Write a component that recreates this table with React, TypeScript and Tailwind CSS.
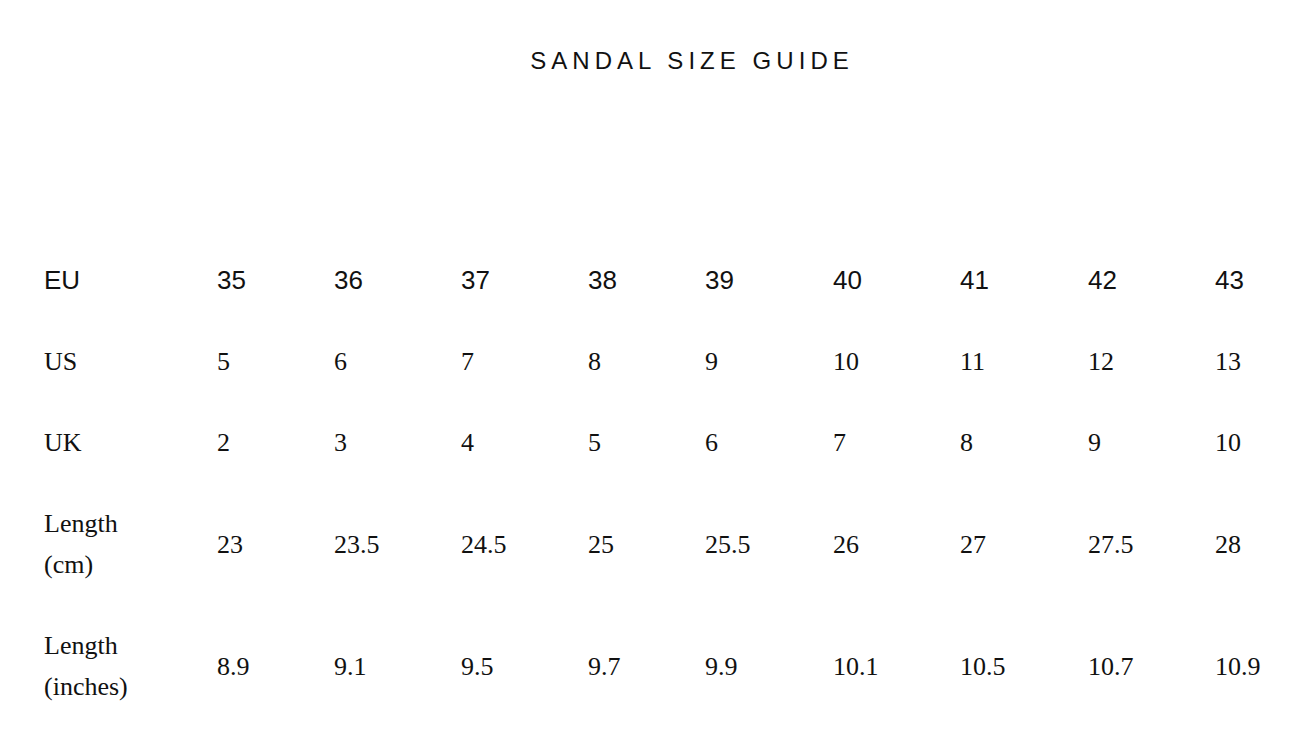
import React from "react";

const sans = "font-['Liberation_Sans',Arial,sans-serif]";
const serif = "font-['Liberation_Serif','Times_New_Roman',serif]";

const rows: { label: React.ReactNode; values: string[]; sans?: boolean }[] = [
  { label: "EU", values: ["35", "36", "37", "38", "39", "40", "41", "42", "43"], sans: true },
  { label: "US", values: ["5", "6", "7", "8", "9", "10", "11", "12", "13"] },
  { label: "UK", values: ["2", "3", "4", "5", "6", "7", "8", "9", "10"] },
  {
    label: (
      <>
        Length
        <br />
        (cm)
      </>
    ),
    values: ["23", "23.5", "24.5", "25", "25.5", "26", "27", "27.5", "28"],
  },
  {
    label: (
      <>
        Length
        <br />
        (inches)
      </>
    ),
    values: ["8.9", "9.1", "9.5", "9.7", "9.9", "10.1", "10.5", "10.7", "10.9"],
  },
];

export default function App() {
  return (
    <div className="w-[1314px] h-[750px] bg-white text-[#111] overflow-hidden">
      <h1
        className={`${sans} pt-[47px] pl-[70px] text-center text-[24px] leading-[28px] tracking-[5.05px] font-normal`}
      >
        SANDAL SIZE GUIDE
      </h1>
      <div className="mt-[165px] pl-[44px]">
        {rows.map((row, i) => (
          <div
            key={i}
            className={`grid grid-cols-[173px_117px_127px_127px_117px_128px_127px_128px_127px_1fr] items-center py-[20px] text-[26px] leading-[41px] ${
              row.sans ? sans : serif
            }`}
          >
            <div>{row.label}</div>
            {row.values.map((v, j) => (
              <div key={j}>{v}</div>
            ))}
          </div>
        ))}
      </div>
    </div>
  );
}
